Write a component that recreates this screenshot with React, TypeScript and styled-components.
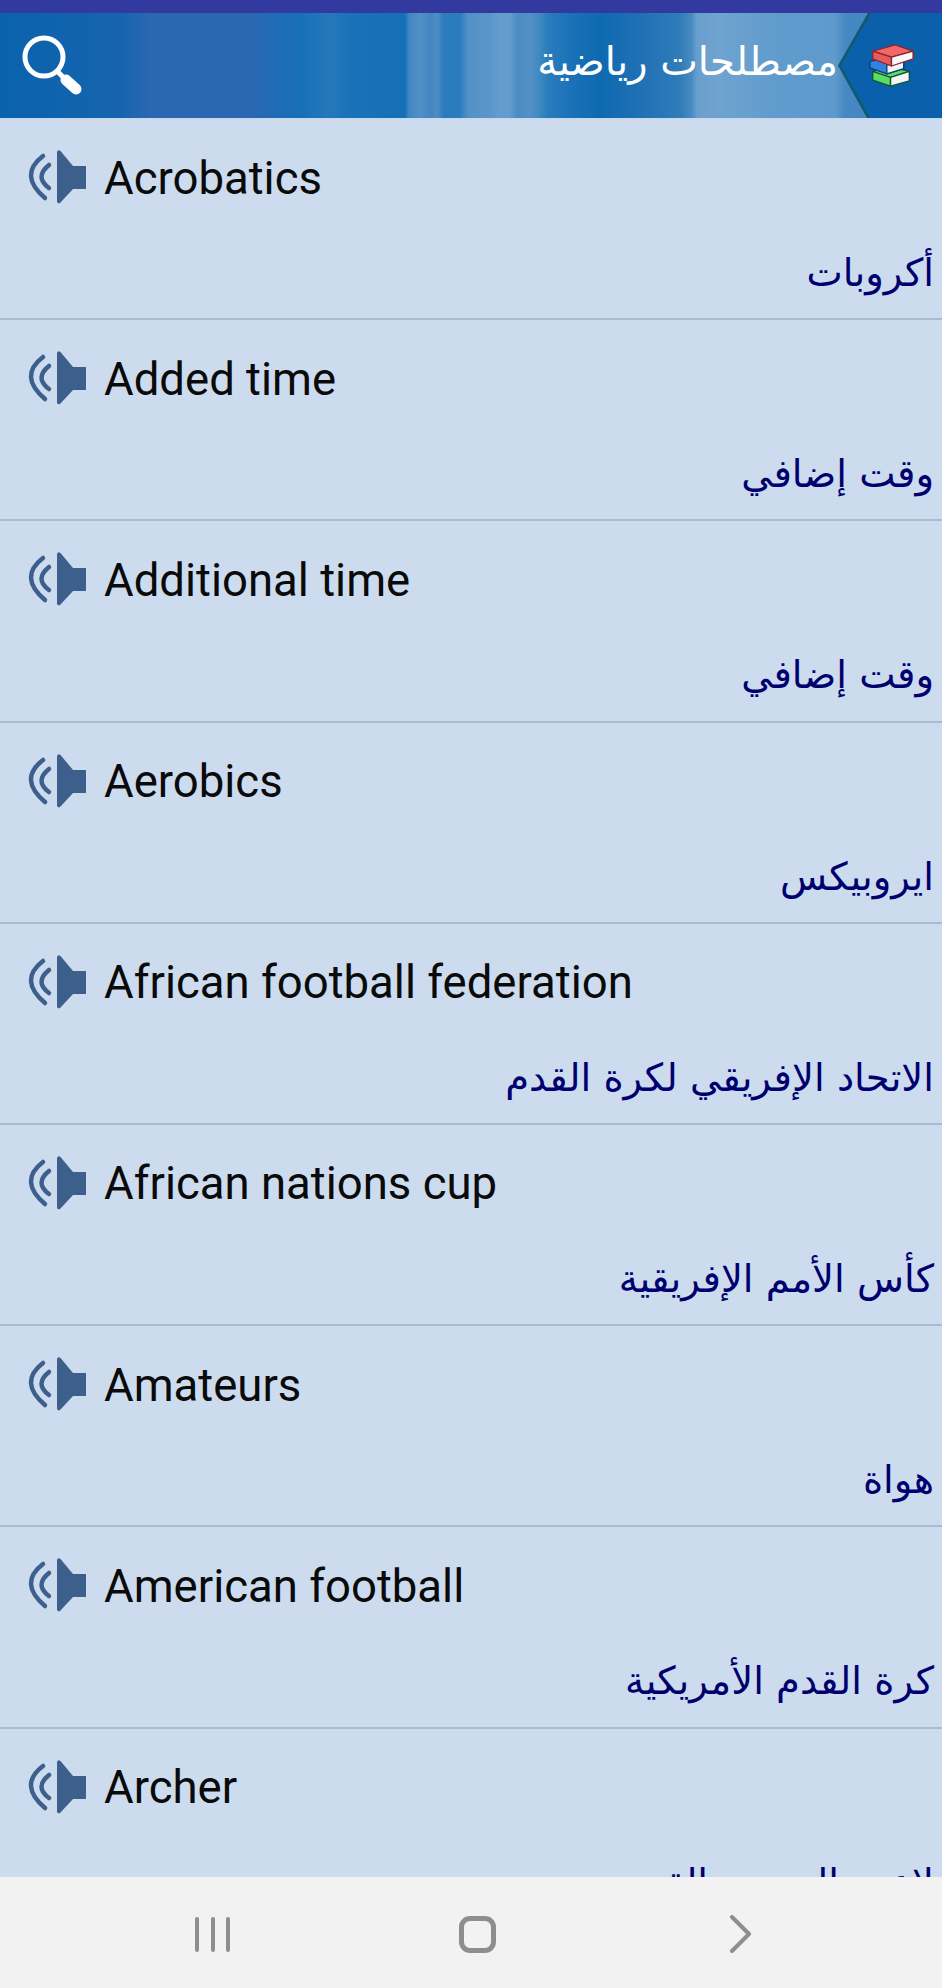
import styled, { createGlobalStyle } from 'styled-components';

const terms = [
  { en: 'Acrobatics', ar: 'أكروبات' },
  { en: 'Added time', ar: 'وقت إضافي' },
  { en: 'Additional time', ar: 'وقت إضافي' },
  { en: 'Aerobics', ar: 'ايروبيكس' },
  { en: 'African football federation', ar: 'الاتحاد الإفريقي لكرة القدم' },
  { en: 'African nations cup', ar: 'كأس الأمم الإفريقية' },
  { en: 'Amateurs', ar: 'هواة' },
  { en: 'American football', ar: 'كرة القدم الأمريكية' },
  { en: 'Archer', ar: 'لاعب السهم والقوس' },
];

const SpeakerIcon = () => (
  <svg width="60" height="56" viewBox="0 0 60 56" fill="none">
    <path d="M15 7Q-10 26 17 49" stroke="#3c5f8c" strokeWidth="4.500" strokeLinecap="round" />
    <path d="M21 16Q6 28 21 39" stroke="#3c5f8c" strokeWidth="4.500" strokeLinecap="round" />
    <path d="M29 4C29 1 31 0.500 32.500 2L45 17H58V40H45L32.500 53.500C31 55 29 54.500 29 52Z" fill="#3c5f8c" />
  </svg>
);

const SearchIcon = () => (
  <svg width="70" height="70" viewBox="0 0 70 70" fill="none">
    <circle cx="28" cy="26" r="19" stroke="#fff" strokeWidth="5" />
    <path d="M42 41L49 48" stroke="#fff" strokeWidth="5" />
    <path d="M50 49L60 58" stroke="#fff" strokeWidth="11" strokeLinecap="round" />
  </svg>
);

const BooksIcon = () => (
  <svg width="47" height="44" viewBox="0 0 50 50" preserveAspectRatio="none">
    <path d="M5 31L24 26L44 31L24 38Z M5 31V41L24 48V38Z" fill="#5fdc62" stroke="#10553c" strokeWidth="1.500" strokeLinejoin="round" />
    <path d="M24 38L44 31V42L24 48Z" fill="#f5f5f5" stroke="#10553c" strokeWidth="1.500" strokeLinejoin="round" />
    <path d="M2 20L22 14L38 20V28L20 34L2 27Z" fill="#2f82e0" stroke="#0e3f7c" strokeWidth="1.500" strokeLinejoin="round" />
    <path d="M20 24L38 19V28L20 34Z" fill="#f5f5f5" stroke="#0e3f7c" strokeWidth="1.500" strokeLinejoin="round" />
    <path d="M5 8L29 1L48 8L25 15Z" fill="#f26868" stroke="#8a2730" strokeWidth="1.500" strokeLinejoin="round" />
    <path d="M5 8V17L25 25V15Z" fill="#e85a5c" stroke="#8a2730" strokeWidth="1.500" strokeLinejoin="round" />
    <path d="M25 15L48 8V17L25 25Z" fill="#fafafa" stroke="#8a2730" strokeWidth="1.500" strokeLinejoin="round" />
  </svg>
);

const App = () => {
  return (
    <Page>
      <GlobalStyle />
      <StatusBar />
      <Header>
        <SearchButton>
          <SearchIcon />
        </SearchButton>
        <TitleGroup>
          <Title>مصطلحات رياضية</Title>
          <LogoTab>
            <BooksIcon />
          </LogoTab>
        </TitleGroup>
      </Header>
      <List>
        {terms.map((term) => (
          <Row key={term.en}>
            <English>
              <SpeakerIcon />
              <Word>{term.en}</Word>
            </English>
            <Arabic dir="rtl">{term.ar}</Arabic>
          </Row>
        ))}
      </List>
      <NavBar>
        <RecentIcon>
          <span />
          <span />
          <span />
        </RecentIcon>
        <HomeIcon />
        <svg width="30" height="38" viewBox="0 0 30 38" fill="none">
          <path d="M7 2L24 19L7 36" stroke="#8e8e8e" strokeWidth="4" strokeLinecap="round" strokeLinejoin="round" />
        </svg>
      </NavBar>
    </Page>
  );
};

const GlobalStyle = createGlobalStyle`
  html, body {
    margin: 0;
    padding: 0;
    background: #ccdcee;
  }
`;

const Page = styled.div`
  display: flex;
  flex-direction: column;
  width: 942px;
  height: 1988px;
  overflow: hidden;
  font-family: Roboto, "Liberation Sans", sans-serif;
`;
const StatusBar = styled.div`
  height: 13px;
  flex: none;
  background: #323a9f;
`;
const Header = styled.header`
  display: flex;
  justify-content: space-between;
  align-items: center;
  flex: none;
  height: 105px;
  background: linear-gradient(
    90deg,
    #0a62ad 0,
    #1664ae 120px,
    #2a68b1 150px,
    #2a68b2 250px,
    #1670b8 300px,
    #2578ba 330px,
    #1a72b8 350px,
    #1570b8 405px,
    #4286c1 409px,
    #5291c6 420px,
    #4486c1 430px,
    #4f8cc4 437px,
    #2a7cbc 444px,
    #2b7cbd 460px,
    #5391c6 468px,
    #5a96c8 490px,
    #669dce 500px,
    #629bcc 510px,
    #4a8cc4 518px,
    #5391c6 530px,
    #3f88c2 540px,
    #2a7cbc 548px,
    #1b72b8 570px,
    #0e6ab0 600px,
    #2070b5 640px,
    #2f7cb9 680px,
    #4a8cc0 692px,
    #6a9fcd 697px,
    #6fa3d0 720px,
    #5f9bcc 780px,
    #5f9acc 835px,
    #4588c3 845px,
    #3f84c0 942px
  );
`;
const SearchButton = styled.div`
  display: flex;
  margin: 0 0 0 16px;
`;
const TitleGroup = styled.div`
  display: flex;
  align-items: center;
  align-self: stretch;
`;
const Title = styled.h1`
  margin: 0 0 10px;
  font-family: "DejaVu Sans", sans-serif;
  font-size: 40px;
  font-weight: 400;
  color: #fff;
  direction: rtl;
`;
const LogoTab = styled.div`
  position: relative;
  display: flex;
  align-items: center;
  justify-content: flex-end;
  box-sizing: border-box;
  width: 104px;
  height: 105px;
  padding: 0 27px 0 0;
  background: #12596e;
  clip-path: polygon(30px 0, 100% 0, 100% 100%, 29px 100%, 0 50%);
  &::before {
    content: '';
    position: absolute;
    inset: 0;
    background: #0a60aa;
    clip-path: polygon(33px 0, 100% 0, 100% 100%, 32px 100%, 3px 50%);
  }
  svg {
    position: relative;
  }
`;
const List = styled.main`
  flex: 1;
  overflow: hidden;
  background: #ccdcee;
  border-top: 1px solid #c5d7ea;
`;
const Row = styled.section`
  display: flex;
  flex-direction: column;
  box-sizing: border-box;
  height: 201.2px;
  padding: 30px 8px 0 28px;
  border-bottom: 2px solid #a9bccf;
`;
const English = styled.div`
  display: flex;
  align-items: center;
  gap: 16px;
  height: 56px;
`;
const Word = styled.span`
  padding-top: 2px;
  font-size: 45.5px;
  color: #0a0a0a;
`;
const Arabic = styled.p`
  margin: 38px 0 0;
  font-family: "DejaVu Sans", sans-serif;
  font-size: 38.5px;
  line-height: 60px;
  color: #00006e;
`;
const NavBar = styled.nav`
  display: flex;
  align-items: center;
  gap: 229px;
  flex: none;
  box-sizing: border-box;
  height: 111px;
  padding: 3px 0 0 195px;
  background: #f2f2f2;
`;
const RecentIcon = styled.div`
  display: flex;
  gap: 11.5px;
  span {
    width: 4px;
    height: 35px;
    background: #8e8e8e;
    border-radius: 2px;
  }
`;
const HomeIcon = styled.div`
  box-sizing: border-box;
  width: 37px;
  height: 37px;
  border: 5px solid #8e8e8e;
  border-radius: 11px;
`;

export default App;
